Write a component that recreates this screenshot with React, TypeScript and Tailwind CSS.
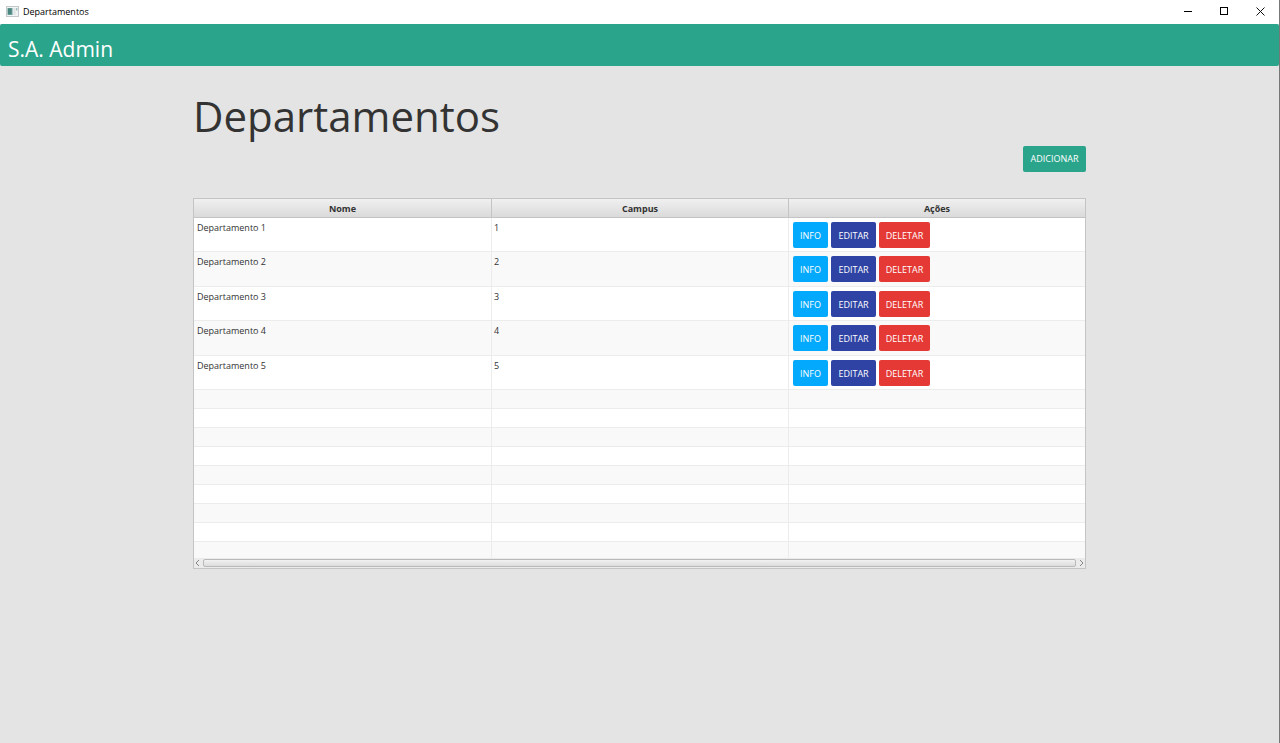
type Department = { name: string; campus: number };

const departments: Department[] = [
  { name: "Departamento 1", campus: 1 },
  { name: "Departamento 2", campus: 2 },
  { name: "Departamento 3", campus: 3 },
  { name: "Departamento 4", campus: 4 },
  { name: "Departamento 5", campus: 5 },
];

const emptyRows = Array.from({ length: 9 }, (_, i) => i);

const actions = [
  { label: "INFO", style: "w-[35px] bg-[#03a9fc]" },
  { label: "EDITAR", style: "w-[45px] bg-[#2e43a3]" },
  { label: "DELETAR", style: "w-[51px] bg-[#e53935]" },
];

function TitleBar() {
  return (
    <div className="flex h-6 items-center justify-between bg-white pr-px pl-1.5">
      <div className="flex items-center gap-1 text-[9px] text-black">
        <svg width="13" height="12" viewBox="0 0 13 12" aria-hidden="true">
          <rect x="0.5" y="0.5" width="12" height="10" fill="#f1f4f4" stroke="#c3c8ca" />
          <rect x="1.5" y="2" width="5" height="7" fill="#6d9f9b" />
          <rect x="2" y="2.5" width="3.5" height="5.5" fill="#4b8580" />
          <rect x="7.5" y="2" width="2" height="7" fill="#dde2e3" />
          <rect x="10.2" y="2" width="1.2" height="2.5" fill="#8fb3af" />
        </svg>
        <span>Departamentos</span>
      </div>
      <div className="flex h-[23px] self-start">
        <button type="button" aria-label="Minimizar" className="flex w-9 items-center justify-center">
          <svg width="9" height="9" viewBox="0 0 9 9" shapeRendering="crispEdges">
            <path d="M0 4.5H8" stroke="#000" />
          </svg>
        </button>
        <button type="button" aria-label="Maximizar" className="flex w-9 items-center justify-center">
          <svg width="9" height="9" viewBox="0 0 9 9" shapeRendering="crispEdges">
            <rect x="0.5" y="0.5" width="7" height="7" fill="none" stroke="#000" />
          </svg>
        </button>
        <button type="button" aria-label="Fechar" className="flex w-9 items-center justify-center">
          <svg width="9" height="9" viewBox="0 0 9 9">
            <path d="M0.5 0.5L8.5 8.5M8.5 0.5L0.5 8.5" stroke="#111" />
          </svg>
        </button>
      </div>
    </div>
  );
}

function DepartmentTable() {
  return (
    <div className="border border-[#c4c4c4] bg-white">
      <div className="h-[359px] overflow-hidden">
        <table className="w-full table-fixed border-separate border-spacing-0 text-[#333]">
          <colgroup>
            <col className="w-[298px]" />
            <col className="w-[297px]" />
            <col />
          </colgroup>
          <thead>
            <tr>
              {["Nome", "Campus", "Ações"].map((title) => (
                <th
                  key={title}
                  scope="col"
                  className="h-[19px] border-r border-b border-[#c4c4c4] bg-linear-to-b from-[#f0f0f0] to-[#dadada] p-0 pt-0.5 text-[9px] leading-4 font-bold last:border-r-0"
                >
                  {title}
                </th>
              ))}
            </tr>
          </thead>
          <tbody>
            {departments.map((d) => (
              <tr key={d.name} className="h-[34px] align-top even:h-[35px] even:bg-[#f9f9f9]">
                <td className="border-r border-b border-[#ececec] px-[3px] py-0.5 text-[9px] leading-4">{d.name}</td>
                <td className="border-r border-b border-[#ececec] px-0.5 py-0.5 text-[9px] leading-4">{d.campus}</td>
                <td className="border-b border-[#ececec] px-1 pt-1 pb-0">
                  <div className="flex gap-[3px]">
                    {actions.map((a) => (
                      <button
                        key={a.label}
                        type="button"
                        className={`${a.style} h-[26px] rounded-xs pt-px text-center text-[9px] whitespace-nowrap text-white`}
                      >
                        {a.label}
                      </button>
                    ))}
                  </div>
                </td>
              </tr>
            ))}
            {emptyRows.map((i) => (
              <tr key={i} className="h-[19px] even:bg-[#f9f9f9]">
                <td className="border-r border-b border-[#ececec] p-0" />
                <td className="border-r border-b border-[#ececec] p-0" />
                <td className="border-b border-[#ececec] p-0" />
              </tr>
            ))}
          </tbody>
        </table>
      </div>
      <div className="flex h-2.5 items-center gap-[3px] bg-[#ebebeb] px-px">
        <svg width="5" height="8" viewBox="0 0 5 8" fill="none" stroke="#858585" aria-hidden="true">
          <path d="M4 1L1 4L4 7" />
        </svg>
        <div className="h-2 flex-1 rounded-xs border border-[#b9b9b9] bg-linear-to-b from-[#f2f2f2] to-[#dcdcdc]" />
        <svg width="5" height="8" viewBox="0 0 5 8" fill="none" stroke="#858585" aria-hidden="true">
          <path d="M1 1L4 4L1 7" />
        </svg>
      </div>
    </div>
  );
}

export default function App() {
  return (
    <div className="flex min-h-screen flex-col border-r border-[#777] bg-[#e4e4e4] font-['Open_Sans','Noto_Sans',sans-serif]">
      <TitleBar />
      <header className="rounded-xs bg-[#2aa58b] px-2 pt-[11px] pb-[3px] text-[21px] leading-7 text-white">
        S.A. Admin
      </header>
      <main className="mx-auto flex w-full max-w-[893px] flex-col pt-5">
        <h1 className="text-[42px] leading-[60px] text-[#333]">Departamentos</h1>
        <button
          type="button"
          className="mb-[26px] h-[26px] w-[63px] self-end rounded-xs bg-[#2aa58b] text-[9px] whitespace-nowrap text-white"
        >
          ADICIONAR
        </button>
        <DepartmentTable />
      </main>
    </div>
  );
}
